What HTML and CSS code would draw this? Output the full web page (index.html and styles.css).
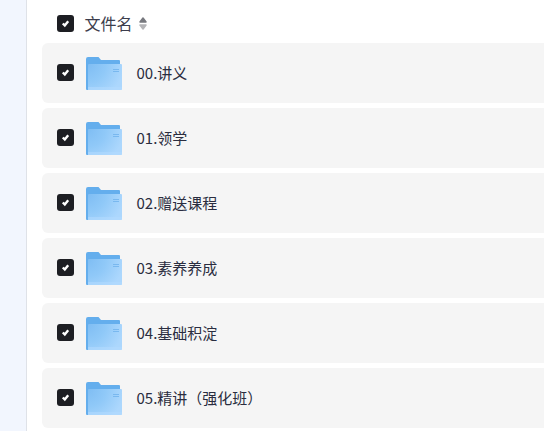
FILE: index.html
```html
<!DOCTYPE html>
<html lang="zh">
<head>
<meta charset="utf-8">
<title>文件列表</title>
<link rel="stylesheet" href="styles.css">
</head>
<body>
<svg class="defs" width="0" height="0" aria-hidden="true">
  <defs>
    <radialGradient id="front" gradientUnits="userSpaceOnUse" cx="2" cy="7" r="36">
      <stop offset="0" stop-color="#7fbdf3"/>
      <stop offset="0.5" stop-color="#90c9f8"/>
      <stop offset="1" stop-color="#acd7fd"/>
    </radialGradient>
    <symbol id="folder" viewBox="0 0 36 33">
      <path d="M0 2a2 2 0 0 1 2-2h10.500l2.500 3H33a1 1 0 0 1 1 1V8H2V33H1a1 1 0 0 1-1-1z" fill="#64aeed"/>
      <path d="M3 7H35a1 1 0 0 1 1 1V32a1 1 0 0 1-1 1H2V8a1 1 0 0 1 1-1z" fill="url(#front)"/>
      <path d="M2 30H36V32a1 1 0 0 1-1 1H2z" fill="#b2daff" opacity="0.6"/>
      <path d="M27 12.500h6M27 14.500h6" stroke="#79b8ef" stroke-width="1"/>
    </symbol>
    <symbol id="check" viewBox="0 0 17 17">
      <rect width="17" height="17" rx="3" fill="#1d1e23"/>
      <path d="M5.800 8.500l2 2 3.400-4.200" fill="none" stroke="#fff" stroke-width="2.400"/>
    </symbol>
  </defs>
</svg>
<div class="page">
  <aside class="sidebar"></aside>
  <main class="content">
    <header class="list-head">
      <svg class="checkbox"><use href="#check"/></svg>
      <span class="head-title">文件名</span>
      <svg class="sort" viewBox="0 0 8 13"><path d="M4 1l3 4H1z" fill="#77787e" stroke="#77787e" stroke-width="1.500" stroke-linejoin="round"/><path d="M1 8h6l-3 4z" fill="#b4b4b7" stroke="#b4b4b7" stroke-width="1.500" stroke-linejoin="round"/></svg>
    </header>
    <ul class="file-list">
      <li class="file-row"><svg class="checkbox"><use href="#check"/></svg><svg class="folder"><use href="#folder"/></svg><span class="file-name">00.讲义</span></li>
      <li class="file-row"><svg class="checkbox"><use href="#check"/></svg><svg class="folder"><use href="#folder"/></svg><span class="file-name">01.领学</span></li>
      <li class="file-row"><svg class="checkbox"><use href="#check"/></svg><svg class="folder"><use href="#folder"/></svg><span class="file-name">02.赠送课程</span></li>
      <li class="file-row"><svg class="checkbox"><use href="#check"/></svg><svg class="folder"><use href="#folder"/></svg><span class="file-name">03.素养养成</span></li>
      <li class="file-row"><svg class="checkbox"><use href="#check"/></svg><svg class="folder"><use href="#folder"/></svg><span class="file-name">04.基础积淀</span></li>
      <li class="file-row"><svg class="checkbox"><use href="#check"/></svg><svg class="folder"><use href="#folder"/></svg><span class="file-name">05.精讲（强化班）</span></li>
    </ul>
  </main>
</div>
</body>
</html>
```
FILE: styles.css
```css
html, body {
  margin: 0;
  height: 100%;
  overflow: hidden;
  background: #fff;
}
body {
  font-family: "Noto Sans CJK SC", sans-serif;
  color: #25262b;
}
.defs {
  display: block;
  height: 0;
}
.page {
  display: flex;
  height: 431px;
}
.sidebar {
  width: 26px;
  flex: none;
  background: #f2f6fe;
  border-right: 1px solid #dfe2e8;
}
.content {
  flex: 1;
  min-width: 0;
  padding-left: 15px;
}
.list-head {
  display: flex;
  align-items: center;
  height: 43px;
  padding: 3px 0 0 15px;
  box-sizing: border-box;
}
.checkbox {
  width: 17px;
  height: 17px;
  flex: none;
}
.head-title {
  margin-left: 10.500px;
  font-size: 16px;
  line-height: 20px;
  color: #3c3d4c;
}
.sort {
  width: 8px;
  height: 13px;
  margin-left: 6.500px;
}
.file-list {
  list-style: none;
  margin: 0;
  padding: 0;
  display: flex;
  flex-direction: column;
  gap: 5px;
}
.file-row {
  display: flex;
  align-items: center;
  height: 60px;
  padding: 0 0 1px 15px;
  box-sizing: border-box;
  background: #f5f5f5;
  border-radius: 6px 0 0 6px;
}
.folder {
  width: 36px;
  height: 33px;
  margin: 2px 0 0 12px;
  flex: none;
}
.file-name {
  margin-left: 14.500px;
  font-size: 15px;
  line-height: 20px;
  color: #2a2d40;
}
```
